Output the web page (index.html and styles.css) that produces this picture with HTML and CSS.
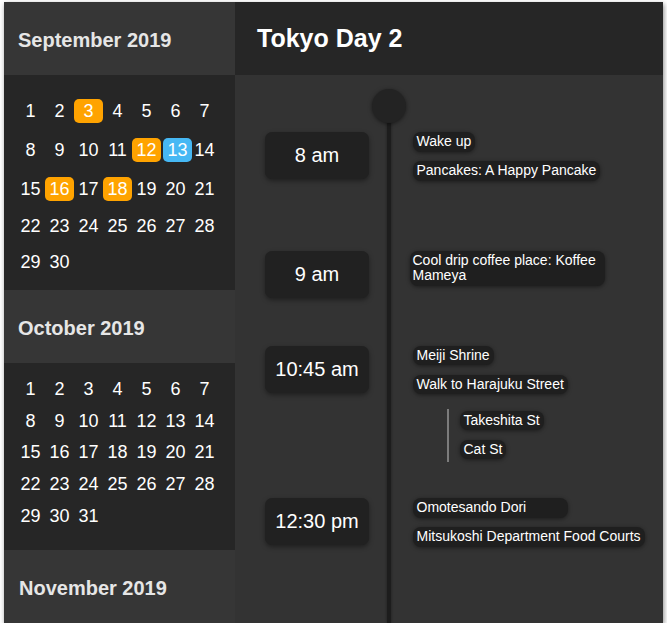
FILE: index.html
```html
<!DOCTYPE html>
<html>
<head>
<meta charset="utf-8">
<link rel="stylesheet" href="styles.css">
</head>
<body>
<div class="app">
  <aside class="sidebar">
    <div class="month-head">September 2019</div>
    <div class="month-body month-body--sep">
      <div class="days days--sep">
        <span class="d">1</span><span class="d">2</span><span class="d hl">3</span><span class="d">4</span><span class="d">5</span><span class="d">6</span><span class="d">7</span>
        <span class="d">8</span><span class="d">9</span><span class="d">10</span><span class="d">11</span><span class="d hl">12</span><span class="d today">13</span><span class="d">14</span>
        <span class="d">15</span><span class="d hl">16</span><span class="d">17</span><span class="d hl">18</span><span class="d">19</span><span class="d">20</span><span class="d">21</span>
        <span class="d">22</span><span class="d">23</span><span class="d">24</span><span class="d">25</span><span class="d">26</span><span class="d">27</span><span class="d">28</span>
        <span class="d">29</span><span class="d">30</span>
      </div>
    </div>
    <div class="month-head">October 2019</div>
    <div class="month-body month-body--oct">
      <div class="days days--oct">
        <span class="d">1</span><span class="d">2</span><span class="d">3</span><span class="d">4</span><span class="d">5</span><span class="d">6</span><span class="d">7</span>
        <span class="d">8</span><span class="d">9</span><span class="d">10</span><span class="d">11</span><span class="d">12</span><span class="d">13</span><span class="d">14</span>
        <span class="d">15</span><span class="d">16</span><span class="d">17</span><span class="d">18</span><span class="d">19</span><span class="d">20</span><span class="d">21</span>
        <span class="d">22</span><span class="d">23</span><span class="d">24</span><span class="d">25</span><span class="d">26</span><span class="d">27</span><span class="d">28</span>
        <span class="d">29</span><span class="d">30</span><span class="d">31</span>
      </div>
    </div>
    <div class="month-head month-head--nov">November 2019</div>
  </aside>
  <main class="main">
    <header class="main-head">Tokyo Day 2</header>
    <section class="timeline">
      <div class="knob"></div>
      <div class="slot slot--1">
        <div class="time">8 am</div>
        <div class="events">
          <span class="pill">Wake up</span>
          <span class="pill">Pancakes: A Happy Pancake</span>
        </div>
      </div>
      <div class="slot slot--2">
        <div class="time">9 am</div>
        <div class="events">
          <span class="pill pill--wrap">Cool drip coffee place: Koffee Mameya</span>
        </div>
      </div>
      <div class="slot slot--3">
        <div class="time">10:45 am</div>
        <div class="events">
          <span class="pill">Meiji Shrine</span>
          <span class="pill">Walk to Harajuku Street</span>
          <div class="sub">
            <span class="pill">Takeshita St</span>
            <span class="pill">Cat St</span>
          </div>
        </div>
      </div>
      <div class="slot slot--4">
        <div class="time">12:30 pm</div>
        <div class="events">
          <span class="pill pill--wide">Omotesando Dori</span>
          <span class="pill">Mitsukoshi Department Food Courts</span>
        </div>
      </div>
    </section>
  </main>
</div>
</body>
</html>
```

FILE: styles.css
```css
* { box-sizing: border-box; }

html, body {
  margin: 0;
  padding: 0;
  background: #ffffff;
}

body {
  font-family: "Liberation Sans", Arial, Helvetica, sans-serif;
  color: #ffffff;
}

.app {
  margin: 2px 0 0 4px;
  width: 659px;
  height: 621px;
  display: flex;
  overflow: hidden;
  box-shadow: 1px 2px 5px rgba(0, 0, 0, 0.45);
}

/* ---------- sidebar ---------- */
.sidebar {
  width: 231px;
  flex: 0 0 231px;
  display: flex;
  flex-direction: column;
  background: #262626;
}

.month-head {
  height: 73px;
  flex: 0 0 73px;
  display: flex;
  align-items: center;
  padding-left: 14px;
  padding-top: 3px;
  background: #363636;
  color: #e6e6e6;
  font-weight: bold;
  font-size: 20px;
}

.month-head--nov {
  padding-left: 15px;
}

.month-body {
  background: #262626;
  padding-left: 12px;
}

.month-body--sep {
  height: 215px;
  flex: 0 0 215px;
  padding-top: 17px;
}

.month-body--oct {
  height: 187px;
  flex: 0 0 187px;
  padding-top: 10px;
}

.days {
  display: grid;
  grid-template-columns: repeat(7, 29px);
  align-items: center;
  font-size: 18px;
}

.days--sep {
  grid-template-rows: 38px 39px 39px 36px 36px;
}

.days--oct {
  grid-auto-rows: 31.75px;
}

.d {
  display: block;
  height: 24px;
  line-height: 24px;
  text-align: center;
  border-radius: 5px;
  color: #ffffff;
}

.hl {
  background: #ffa300;
}

.today {
  background: #46b8f4;
  margin-left: 2px;
  margin-right: -2px;
}

/* ---------- main ---------- */
.main {
  flex: 1 1 auto;
  display: flex;
  flex-direction: column;
  background: #333333;
}

.main-head {
  height: 73px;
  flex: 0 0 73px;
  display: flex;
  align-items: center;
  padding-left: 22px;
  background: #262626;
  font-weight: bold;
  font-size: 25px;
  color: #ffffff;
}

.timeline {
  position: relative;
  flex: 1 1 auto;
  padding-top: 14px;
}

.timeline::before {
  content: "";
  position: absolute;
  left: 152px;
  top: 30px;
  bottom: 0;
  width: 4px;
  background: #1d1d1d;
  box-shadow: 0 0 3px rgba(0, 0, 0, 0.45);
}

.knob {
  position: relative;
  z-index: 1;
  width: 34px;
  height: 34px;
  margin-left: 137px;
  border-radius: 50%;
  background: #232323;
  box-shadow: 0 1px 4px rgba(0, 0, 0, 0.5);
}

.slot {
  display: grid;
  grid-template-columns: 104px 1fr;
  column-gap: 43.5px;
  align-items: start;
  padding-left: 30px;
}

.slot--1 { margin-top: 9px; }
.slot--2 { margin-top: 70px; }
.slot--3 { margin-top: 48px; }
.slot--4 { margin-top: 36px; }

.time {
  height: 47px;
  border-radius: 7px;
  background: #212121;
  box-shadow: 0 2px 5px rgba(0, 0, 0, 0.4);
  display: flex;
  align-items: center;
  justify-content: center;
  font-size: 20px;
  color: #ffffff;
}

.events {
  display: flex;
  flex-direction: column;
  align-items: flex-start;
  gap: 9.5px;
}

.pill {
  display: inline-block;
  padding: 2px 4px;
  line-height: 15.5px;
  font-size: 14px;
  color: #ffffff;
  background: #1f1f1f;
  border-radius: 8px;
  box-shadow: 0 1px 4px rgba(0, 0, 0, 0.45);
}

.pill--wrap {
  max-width: 195px;
  margin-left: -3px;
  padding-left: 3px;
}

.pill--wide {
  min-width: 155px;
}

.sub {
  display: flex;
  flex-direction: column;
  align-items: flex-start;
  gap: 9.5px;
  margin-top: 5px;
  margin-left: 34.5px;
  padding: 2px 0 3px 10.5px;
  border-left: 2px solid #7c7c7c;
}
```
